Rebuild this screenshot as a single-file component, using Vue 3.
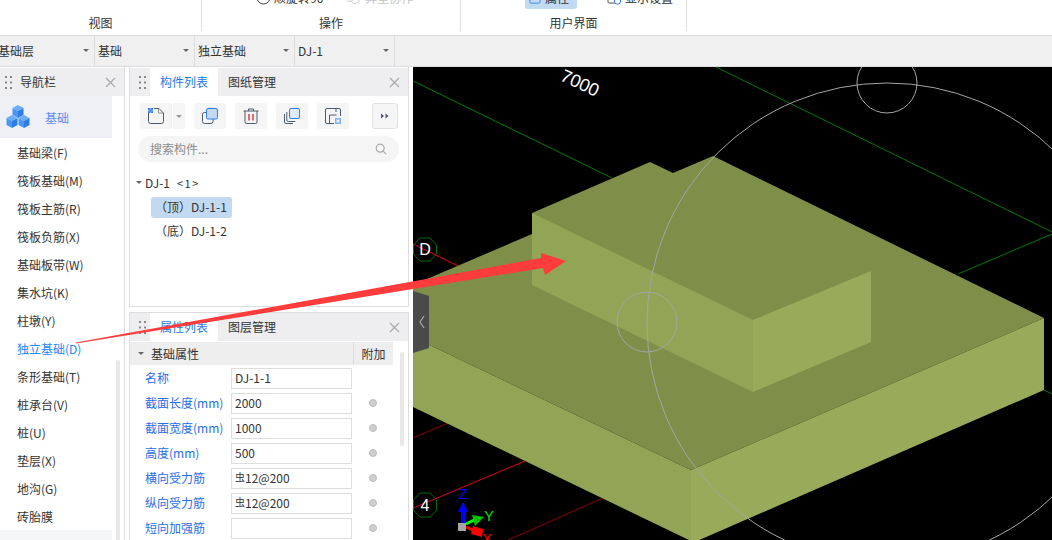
<script setup>
const navItems = [
  '基础梁(F)', '筏板基础(M)', '筏板主筋(R)', '筏板负筋(X)', '基础板带(W)', '集水坑(K)', '柱墩(Y)',
  '独立基础(D)', '条形基础(T)', '桩承台(V)', '桩(U)', '垫层(X)', '地沟(G)', '砖胎膜',
]
const selects = ['基础层', '基础', '独立基础', 'DJ-1']
const props = [
  { name: '名称', value: 'DJ-1-1', noDot: true },
  { name: '截面长度(mm)', value: '2000' },
  { name: '截面宽度(mm)', value: '1000' },
  { name: '高度(mm)', value: '500' },
  { name: '横向受力筋', value: '12@200', bar: true },
  { name: '纵向受力筋', value: '12@200', bar: true },
  { name: '短向加强筋', value: '' },
]
const cubes = [
  { x: 6, y: 0 },
  { x: 0, y: 10 },
  { x: 12, y: 10 },
]
</script>

<template>
  <div class="app">
    <div class="ribbon">
      <div class="section sec-view">
        <div class="sec-row"></div>
        <div class="sec-label">视图</div>
      </div>
      <div class="section sec-op">
        <div class="sec-row op-row">
          <svg class="rot-icon" width="15" height="15" viewBox="0 0 15 15">
            <circle cx="7.5" cy="7.5" r="6.5" fill="none" stroke="#444" stroke-width="1" />
          </svg>
          <span class="rib-text">顺旋转90</span>
          <svg class="off-icon" width="15" height="15" viewBox="0 0 15 15">
            <circle cx="5" cy="7" r="4.5" fill="none" stroke="#cfcfcf" />
            <circle cx="10" cy="9" r="4.5" fill="none" stroke="#cfcfcf" />
          </svg>
          <span class="rib-text off">异型协作</span>
        </div>
        <div class="sec-label">操作</div>
      </div>
      <div class="section sec-ui">
        <div class="sec-row ui-row">
          <div class="rib-on">
            <svg width="14" height="14" viewBox="0 0 14 14">
              <rect x="1" y="1" width="12" height="12" rx="1.5" fill="none" stroke="#2f7de8" />
            </svg>
            <span class="rib-text">属性</span>
          </div>
          <div class="rib-plain">
            <svg width="14" height="14" viewBox="0 0 14 14">
              <rect x="1" y="1" width="10" height="11" rx="1" fill="none" stroke="#555" />
              <circle cx="10.5" cy="10" r="3.2" fill="#fff" stroke="#2f7de8" />
            </svg>
            <span class="rib-text">显示设置</span>
          </div>
        </div>
        <div class="sec-label">用户界面</div>
      </div>
    </div>

    <div class="select-bar">
      <div v-for="s in selects" :key="s" class="select">
        <span>{{ s }}</span>
        <i class="caret"></i>
      </div>
    </div>

    <div class="main">
      <aside class="nav">
        <div class="head">
          <svg class="grip" width="7" height="13" viewBox="0 0 7 13">
            <path d="M0 0h2v2H0zM5 0h2v2H5zM0 5.5h2v2H0zM5 5.5h2v2H5zM0 11h2v2H0zM5 11h2v2H5z" fill="#888" />
          </svg>
          <span class="nav-title">导航栏</span>
          <svg class="close" width="11" height="11" viewBox="0 0 11 11">
            <path d="M1 1l9 9M10 1l-9 9" stroke="#aaa" stroke-width="1.2" fill="none" />
          </svg>
        </div>
        <div class="nav-body">
          <div class="nav-list">
            <div class="nav-group">
              <svg width="24" height="24" viewBox="0 0 24 24">
                <g v-for="c in cubes" :key="c.x + '-' + c.y" :transform="`translate(${c.x} ${c.y})`">
                  <path d="M6 0l5.5 3L6 6 .5 3z" fill="#6aaef7" />
                  <path d="M.5 3L6 6v7L.5 10z" fill="#4b96f3" />
                  <path d="M11.5 3L6 6v7l5.5-3z" fill="#2c7de8" />
                </g>
              </svg>
              <span>基础</span>
            </div>
            <div v-for="item in navItems" :key="item" class="nav-item" :class="{ active: item === '独立基础(D)' }">
              {{ item }}
            </div>
            <div class="nav-tail"></div>
          </div>
          <div class="nav-scroll"><div class="nav-thumb"></div></div>
        </div>
      </aside>

      <div class="middle">
        <section class="panel panel-top">
          <div class="head">
            <svg class="grip" width="7" height="13" viewBox="0 0 7 13">
              <path d="M0 0h2v2H0zM5 0h2v2H5zM0 5.5h2v2H0zM5 5.5h2v2H5zM0 11h2v2H0zM5 11h2v2H5z" fill="#888" />
            </svg>
            <span class="tab on">构件列表</span>
            <span class="tab">图纸管理</span>
            <svg class="close" width="11" height="11" viewBox="0 0 11 11">
              <path d="M1 1l9 9M10 1l-9 9" stroke="#aaa" stroke-width="1.2" fill="none" />
            </svg>
          </div>
          <div class="tools">
            <div class="tool-split">
              <div class="tool">
                <svg width="16" height="16" viewBox="0 0 16 16">
                  <path d="M.5 5v8.5a2 2 0 0 0 2 2h11a2 2 0 0 0 2-2V5l-4.500-4.500H6" fill="none" stroke="#4d5a6b" />
                  <path d="M10.5 .5V5H15" fill="none" stroke="#4d5a6b" stroke-width=".6" />
                  <rect x="0" y="0" width="5" height="5" fill="#7fb0f0" />
                  <path d="M0 0h1.7v1.7H0zM3.3 0H5v1.7H3.3zM1.7 1.7h1.6v1.6H1.7zM0 3.3h1.7V5H0zM3.3 3.3H5V5H3.3z" fill="#2f7de8" />
                </svg>
              </div>
              <div class="tool-drop"><i class="caret"></i></div>
            </div>
            <div class="tool">
              <svg width="16" height="16" viewBox="0 0 16 16">
                <rect x=".5" y="4.5" width="10.5" height="11" rx="2" fill="none" stroke="#4d5a6b" />
                <rect x="4.5" y=".5" width="11" height="10.5" rx="1.5" fill="#c5d9f5" stroke="#2f7de8" />
              </svg>
            </div>
            <div class="tool">
              <svg width="16" height="16" viewBox="0 0 16 16">
                <path d="M.5 3h15M5.5 3V1h5v2" fill="none" stroke="#4d5a6b" />
                <path d="M2 3v11a1.5 1.5 0 0 0 1.5 1.5h9A1.5 1.5 0 0 0 14 14V3" fill="none" stroke="#4d5a6b" />
                <path d="M6 6v6.5M10 6v6.5" stroke="#e02020" stroke-width="1.3" />
              </svg>
            </div>
            <div class="tool">
              <svg width="16" height="16" viewBox="0 0 16 16">
                <path d="M.5 6v8A1.5 1.5 0 0 0 2 15.500h7" fill="none" stroke="#4d5a6b" />
                <path d="M2.8 4v8a1.500 1.500 0 0 0 1.500 1.500h7" fill="none" stroke="#4d5a6b" />
                <rect x="5.5" y=".5" width="10" height="10" rx="1.5" fill="#dfeafb" stroke="#2f7de8" />
              </svg>
            </div>
            <div class="tool">
              <svg width="16" height="16" viewBox="0 0 16 16">
                <path d="M15.5 8V2A1.5 1.5 0 0 0 14 .5H2A1.5 1.5 0 0 0 .5 2v12A1.5 1.5 0 0 0 2 15.500h7" fill="none" stroke="#4d5a6b" />
                <path d="M4.5 15V7h7M11 1v3" fill="none" stroke="#4d5a6b" />
                <rect x="10" y="10" width="6" height="6" fill="#7fb0f0" />
                <rect x="11.5" y="11.5" width="3" height="3" fill="#e8f1fc" />
              </svg>
            </div>
            <div class="tool-more">
              <svg width="8" height="6" viewBox="0 0 8 6">
                <path d="M0 .5L3 3 0 5.500zM4.500 .5L7.500 3 4.500 5.500z" fill="#4d5a6b" />
              </svg>
            </div>
          </div>
          <div class="search">
            <span>搜索构件...</span>
            <svg width="12" height="12" viewBox="0 0 12 12">
              <circle cx="5.2" cy="5.2" r="4" fill="none" stroke="#aaa" stroke-width="1.2" />
              <path d="M8.2 8.2l3 3" stroke="#aaa" stroke-width="1.2" />
            </svg>
          </div>
          <div class="tree">
            <div class="tree-root"><i class="caret"></i><span>DJ-1</span><span class="count">&lt;1&gt;</span></div>
            <div class="tree-leaf sel">（顶）DJ-1-1</div>
            <div class="tree-leaf">（底）DJ-1-2</div>
          </div>
        </section>

        <section class="panel panel-bottom">
          <div class="head">
            <svg class="grip" width="7" height="13" viewBox="0 0 7 13">
              <path d="M0 0h2v2H0zM5 0h2v2H5zM0 5.5h2v2H0zM5 5.5h2v2H5zM0 11h2v2H0zM5 11h2v2H5z" fill="#888" />
            </svg>
            <span class="tab on">属性列表</span>
            <span class="tab">图层管理</span>
            <svg class="close" width="11" height="11" viewBox="0 0 11 11">
              <path d="M1 1l9 9M10 1l-9 9" stroke="#aaa" stroke-width="1.2" fill="none" />
            </svg>
          </div>
          <div class="prop-wrap">
            <div class="prop-table">
              <div class="group-row">
                <i class="caret"></i>
                <span class="group-name">基础属性</span>
                <span class="group-extra">附加</span>
              </div>
              <div v-for="p in props" :key="p.name" class="prop-row">
                <span class="prop-name">{{ p.name }}</span>
                <div class="prop-input" :class="{ raised: p.bar }"><span v-if="p.bar" class="bar-mark">虫</span>{{ p.value }}</div>
                <span class="dot-cell"><i v-if="!p.noDot" class="dot"></i></span>
              </div>
            </div>
            <div class="prop-scroll"></div>
          </div>
        </section>
      </div>

      <div class="canvas">
        <svg width="639" height="473" viewBox="413 67 639 473">
          <path d="M413 81L612 178M716 67L1052 232M1052 234L958 274M1044 390L1052 394" stroke="#007a00" stroke-width="1" fill="none" />
          <path d="M413 244L458 266M413 508L525 461" stroke="#e0001a" stroke-width="1" fill="none" />
          <path d="M413 438L448 423M508 540L603 498" stroke="#8b0010" stroke-width="1" fill="none" />

          <polygon points="413,285 532,234 532,213 650,162 673,173 713,156 1044,318 691,470 413,337" fill="#7f8f4a" />
          <polygon points="413,337 691,470 691,541 413,407" fill="#92a556" />
          <polygon points="691,470 1044,318 1044,390 697,541 691,541" fill="#99ab5a" />
          <polygon points="532,213 753,320 753,392 532,285" fill="#92a556" />
          <polygon points="753,320 871,271 871,342 753,392" fill="#99ab5a" />

          <g fill="none" stroke="#a4a6a4" stroke-width="1">
            <circle cx="887" cy="323" r="240" />
            <circle cx="887" cy="83" r="30" />
            <circle cx="647" cy="322" r="30" />
          </g>

          <text x="580" y="89" class="cad-text" text-anchor="middle" transform="rotate(25 580 83)">7000</text>
          <polygon points="420,238 430,238 436.5,245 436.5,254 430,261 420,261 413.5,254 413.5,245" fill="none" stroke="#0a6b0a" />
          <text x="425" y="255" class="cad-text axis" text-anchor="middle">D</text>
          <polygon points="420,493 430,493 436.5,500 436.5,510 430,517 420,517 413.5,510 413.5,500" fill="none" stroke="#0a6b0a" />
          <text x="425" y="511" class="cad-text axis" text-anchor="middle">4</text>

          <g>
            <path d="M463 523V510" stroke="#0000ff" stroke-width="4" />
            <path d="M458 512l5-10 5 10z" fill="#0000ff" />
            <path d="M466 524l10-5" stroke="#00ff00" stroke-width="3" />
            <path d="M472 515l12 2-9 9z" fill="#00c000" />
            <path d="M466 527l9 4" stroke="#ff0000" stroke-width="3" />
            <path d="M473 526l10 3-1 8-11-3z" fill="#ff0000" />
            <rect x="458" y="523" width="8" height="8" fill="#a5a5a5" />
            <text x="463" y="499" class="gizmo" fill="#0000ff" text-anchor="middle">Z</text>
            <text x="489" y="521" class="gizmo" fill="#00e000" text-anchor="middle">Y</text>
            <text x="487" y="544" class="gizmo" fill="#ff0000" text-anchor="middle">X</text>
          </g>

          <polygon points="413,291 429,296 429,348 413,353" fill="#4a4a4a" />
          <path d="M424 316l-4 6 4 6" fill="none" stroke="#a8a8a8" stroke-width="1.2" />
        </svg>
      </div>
    </div>

    <svg class="pointer" width="1052" height="540" viewBox="0 0 1052 540">
      <polygon points="76,342.5 541,258 541,253 566,261 545,275 543,268 76,343.5" fill="#ff3c3c" />
    </svg>
  </div>
</template>

<style scoped>
.app {
  position: relative;
  width: 1052px;
  height: 540px;
  overflow: hidden;
  background: #fff;
  font-family: "Noto Sans CJK SC", "Noto Sans", sans-serif;
  font-size: 12px;
  color: #333;
}

.ribbon {
  display: flex;
  height: 35px;
  border-bottom: 1px solid #dcdcdc;
  box-sizing: content-box;
}
.section {
  height: 31px;
  border-right: 1px solid #ddd;
  box-sizing: border-box;
}
.sec-view { width: 202px; }
.sec-op { width: 259px; }
.sec-ui { width: 226px; }
.sec-row {
  display: flex;
  align-items: flex-end;
  height: 9px;
  overflow: hidden;
}
.sec-label {
  height: 22px;
  line-height: 28px;
  text-align: center;
}
.op-row {
  padding-left: 54px;
  padding-bottom: 4px;
  height: 5px;
  box-sizing: content-box;
}
.rot-icon, .off-icon { flex: none; }
.off-icon { margin-left: 22px; }
.rib-text {
  line-height: 15px;
  white-space: nowrap;
  flex: none;
}
.op-row .rib-text { margin-left: 3px; }
.op-row .rib-text.off { margin-left: 5px; color: #c4c4c4; }
.ui-row { padding-left: 64px; }
.rib-on {
  display: flex;
  align-items: flex-end;
  gap: 4px;
  width: 52px;
  height: 9px;
  padding: 0 8px 4px 4px;
  box-sizing: border-box;
  background: #c2d9f2;
  border-radius: 0 0 3px 3px;
  flex: none;
}
.rib-plain {
  display: flex;
  align-items: flex-end;
  gap: 4px;
  margin-left: 30px;
  padding-bottom: 4px;
  flex: none;
}

.select-bar {
  display: flex;
  height: 30px;
  margin-left: -5px;
  background: #f0f0f0;
  border-bottom: 1px solid #dcdcdc;
}
.select {
  display: flex;
  align-items: center;
  justify-content: space-between;
  width: 100px;
  padding: 0 5px 1px 3px;
  box-sizing: border-box;
  border-right: 1px solid #dcdcdc;
}
.caret {
  display: block;
  width: 0;
  height: 0;
  border-left: 3px solid transparent;
  border-right: 3px solid transparent;
  border-top: 3px solid #666;
  flex: none;
}

.main {
  display: flex;
  height: 473px;
}

.head {
  display: flex;
  align-items: center;
  height: 28px;
  background: #eeeef0;
  flex: none;
}
.grip {
  flex: none;
  margin-left: 5px;
  margin-right: 5px;
}
.panel .grip {
  margin-left: 9px;
  margin-right: 4px;
}
.close { margin-left: auto; margin-right: 8px; }

.nav {
  display: flex;
  flex-direction: column;
  width: 125px;
  padding-top: 1px;
  border-right: 1px solid #ddd;
  box-sizing: border-box;
  flex: none;
}
.nav-title { margin-left: 3px; padding-bottom: 1px; }
.nav-body {
  display: flex;
  flex: 1;
  min-height: 0;
}
.nav-list {
  width: 112px;
  flex: none;
}
.nav-group {
  display: flex;
  align-items: center;
  gap: 15px;
  height: 42px;
  padding-left: 6px;
  background: #eef0f5;
  color: #5b8def;
}
.nav-item {
  height: 28px;
  line-height: 29px;
  padding-left: 17px;
}
.nav-item.active { color: #1a87f5; }
.nav-tail {
  height: 20px;
  background: #f5f6f8;
}
.nav-scroll {
  flex: 1;
  padding: 264px 4px 0;
}
.nav-thumb {
  height: 200px;
  background: #e8e8e8;
  border-radius: 2px;
}

.middle {
  display: flex;
  flex-direction: column;
  width: 280px;
  margin-left: 4px;
  flex: none;
}
.panel {
  border: 1px solid #ddd;
  border-top: none;
  box-sizing: border-box;
}
.panel-top {
  height: 241px;
  padding-top: 1px;
}
.panel-bottom {
  flex: 1;
  margin-top: 5px;
  border-top: 1px solid #ddd;
  border-bottom: none;
}
.tab {
  display: flex;
  align-items: center;
  height: 28px;
  padding: 0 10px 1px;
  box-sizing: border-box;
}
.tab.on {
  background: #fff;
  color: #1f7ae8;
}

.tools {
  display: flex;
  gap: 9px;
  margin-top: 7px;
  padding-left: 10px;
  padding-right: 10px;
}
.tool-split { display: flex; gap: 1px; }
.tool {
  display: flex;
  align-items: center;
  justify-content: center;
  width: 32px;
  height: 26px;
  background: #f5f5f5;
  border-radius: 3px;
}
.tool-drop {
  display: flex;
  align-items: center;
  justify-content: center;
  width: 12px;
  height: 26px;
  background: #f5f5f5;
}
.tool-drop .caret { border-top-color: #999; }
.tool-more {
  display: flex;
  align-items: center;
  justify-content: center;
  width: 26px;
  height: 26px;
  margin-left: auto;
  background: #f5f5f5;
  border: 1px solid #e2e2e2;
  border-radius: 3px;
  box-sizing: border-box;
}

.search {
  display: flex;
  align-items: center;
  justify-content: space-between;
  height: 26px;
  margin: 7px 9px 0 8px;
  padding: 0 12px 1px;
  box-sizing: border-box;
  background: #f5f5f5;
  border-radius: 13px;
  color: #8c8c8c;
}

.tree { margin-top: 9px; }
.tree-root {
  display: flex;
  align-items: center;
  height: 24px;
  padding: 0 0 1px 6px;
  box-sizing: border-box;
}
.tree-root .caret { margin-right: 3px; }
.count {
  margin-left: 7px;
  letter-spacing: 1.5px;
  font-size: 11px;
}
.tree-leaf {
  width: 81px;
  height: 21px;
  line-height: 20px;
  margin: 2px 0 3px 21px;
  padding-left: 4px;
  box-sizing: border-box;
  white-space: nowrap;
  border-radius: 3px;
}
.tree-leaf.sel { background: #c2d9f2; }

.prop-wrap { display: flex; }
.prop-table { width: 263px; flex: none; }
.group-row {
  display: flex;
  align-items: center;
  height: 23px;
  margin-top: 1px;
  background: #eeeeee;
}
.group-row .caret { margin-left: 8px; }
.group-name { margin-left: 7px; padding-bottom: 1px; }
.group-extra {
  display: flex;
  align-items: center;
  justify-content: center;
  width: 40px;
  height: 23px;
  padding-bottom: 1px;
  margin-left: auto;
  border-left: 1px solid #ddd;
  box-sizing: border-box;
}
.prop-row {
  display: flex;
  align-items: center;
  height: 25px;
  padding-top: 2px;
  box-sizing: border-box;
}
.prop-name {
  width: 101px;
  padding: 0 0 2px 15px;
  box-sizing: border-box;
  color: #2a6ee8;
  white-space: nowrap;
  flex: none;
}
.prop-input {
  width: 121px;
  height: 21px;
  line-height: 18px;
  padding-left: 3px;
  background: #fff;
  border: 1px solid #ddd;
  box-sizing: border-box;
  flex: none;
}
.raised { line-height: 16px; }
.bar-mark {
  font-size: 10px;
  vertical-align: 2px;
}
.dot-cell {
  display: flex;
  justify-content: center;
  flex: 1;
}
.dot {
  display: block;
  width: 8px;
  height: 8px;
  margin-bottom: 1px;
  border-radius: 50%;
  background: #cfcfcf;
  border: 1px solid #bdbdbd;
  box-sizing: border-box;
}
.prop-scroll {
  width: 4px;
  height: 94px;
  margin: 11px 0 0 7px;
  background: #e8e8e8;
  border-radius: 2px;
}

.canvas {
  width: 639px;
  height: 473px;
  margin-left: 4px;
  background: #000;
  overflow: hidden;
  flex: none;
}
.canvas svg { display: block; }
.cad-text {
  font-family: "Liberation Sans", sans-serif;
  font-size: 18px;
  fill: #fff;
}
.cad-text.axis { font-size: 16px; }
.gizmo {
  font-family: "Liberation Sans", sans-serif;
  font-size: 15px;
}

.pointer {
  position: absolute;
  left: 0;
  top: 0;
  pointer-events: none;
}
</style>
